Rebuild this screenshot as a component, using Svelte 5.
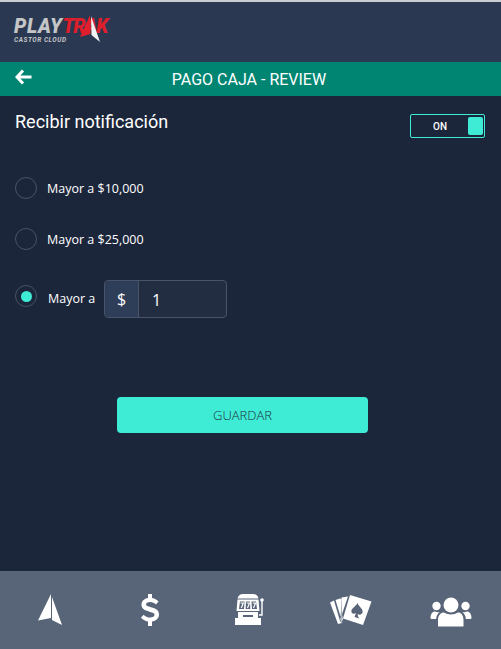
<script>
  const options = ["Mayor a $10,000", "Mayor a $25,000"];
</script>

<div class="page">
  <header class="topbar">
    <div class="logo">
      <div class="logo-name"><span class="play">PLAY</span><span class="trak">TRAK</span></div>
      <div class="logo-sub">CASTOR CLOUD</div>
      <svg class="logo-sail" viewBox="0 0 22 28" width="22" height="28">
        <path d="M10 0 L10.500 19 L0 22 Z" fill="#e0202c" />
        <path d="M11 1 L20 27 L11.500 20 Z" fill="#f2f2f2" />
      </svg>
    </div>
  </header>

  <div class="titlebar">
    <svg class="back" viewBox="0 0 18 16" width="18" height="16">
      <path d="M8 1.500 L2 8 L8 14.500 M2.500 8 H16.500" fill="none" stroke="#fff" stroke-width="3" />
    </svg>
    <h1>PAGO CAJA - REVIEW</h1>
  </div>

  <main class="content">
    <div class="notify">
      <h2>Recibir notificación</h2>
      <div class="toggle">
        <span>ON</span>
        <i></i>
      </div>
    </div>

    {#each options as label}
      <div class="option">
        <span class="radio"></span>
        <span class="label">{label}</span>
      </div>
    {/each}

    <div class="option custom">
      <span class="radio checked"></span>
      <span class="label">Mayor a</span>
      <div class="amount">
        <span class="prefix">$</span>
        <span class="value">1</span>
      </div>
    </div>

    <button class="save">GUARDAR</button>
  </main>

  <nav class="tabs">
    <svg viewBox="0 0 24 32" width="24" height="32">
      <path d="M13 0 L13 24 L0 26.500 Z" fill="#fff" />
      <path d="M14 3 L24 31 L14 26 Z" fill="#fff" />
    </svg>
    <svg viewBox="0 0 20 32" width="20" height="32">
      <path d="M8 0 H12 V4 C15 4.500 17.500 6 18.500 7.500 L16 10.500 C14.500 9 12.500 8 10 8 C7.500 8 6 9 6 10.300 C6 11.800 7.500 12.300 11 13.200 C16 14.400 19 16 19 20.500 C19 24.500 16 26.800 12 27.500 V32 H8 V27.500 C5 27 2.500 25.500 1 23.500 L3.700 20.700 C5.300 22.500 7.500 23.600 10 23.600 C12.800 23.600 14.500 22.500 14.500 20.800 C14.500 19.200 13 18.600 9.500 17.700 C4.500 16.500 1.500 14.800 1.500 10.600 C1.500 7 4.200 4.700 8 4 Z" fill="#fff" />
    </svg>
    <svg viewBox="0 0 30 32" width="30" height="32">
      <path d="M8 0 H18 C21 0 23 2 23.500 4.500 H2.500 C3 2 5 0 8 0 Z" fill="#fff" />
      <path fill-rule="evenodd" d="M2.500 5.500 H23.500 L24.500 17 H1.500 Z M5 7.500 L4 15 H9 L9.500 7.500 Z M11 7.500 L10.700 15 H15.300 L15 7.500 Z M16.500 7.500 L17 15 H22 L21 7.500 Z" fill="#fff" />
      <path d="M5.500 9 H8.300 L6.300 14 M11.700 9 H14.500 L12.500 14 M17.700 9 H20.500 L18.500 14" fill="none" stroke="#fff" stroke-width="1.200" />
      <path fill-rule="evenodd" d="M3 18 H23 V24 H26 V31 H0 V24 H3 Z M8 21 V23 H18 V21 Z" fill="#fff" />
      <circle cx="27" cy="6" r="1.800" fill="#fff" />
      <path d="M27 7 V21 H24" fill="none" stroke="#fff" stroke-width="1.400" />
    </svg>
    <svg viewBox="0 0 42 32" width="42" height="32">
      <g fill="#fff">
        <path d="M0 8.500 L4 6.500 L10 27 L12 29 L8 30 Z" />
        <path d="M5.500 6 L10 4.500 L11.500 5 L10.500 26 L12.500 29 Z" />
        <path d="M11.500 3.500 L18 2.500 L12 20 L13 27 L11.500 25 Z" />
      </g>
      <path fill-rule="evenodd" d="M20 1 L41.500 7.500 L33 31 L13 24.500 Z M27.500 9 C25.500 13 20.500 14.500 21.500 18 C22 20 24.500 20.300 26 19 L24.500 23 L29.500 24.500 C28 23 27.700 21.500 27.700 20 C29.500 21.300 32 20.500 32.500 18.500 C33.500 15 29 13 27.500 9 Z" fill="#fff" />
    </svg>
    <svg class="people" viewBox="0 0 42 30" width="42" height="30">
      <g fill="#fff">
        <circle cx="21" cy="8" r="7.500" />
        <circle cx="6.500" cy="9" r="4.200" />
        <circle cx="35.500" cy="9" r="4.200" />
        <path d="M8 29 V23 C8 18 11 15.500 14 15.500 C16 16.800 18.500 17.500 21 17.500 C23.500 17.500 26 16.800 28 15.500 C31 15.500 33.500 18 33.500 23 V29 Q33.500 29.500 33 29.500 H9 Q8 29.500 8 29 Z" />
        <path d="M0.500 21 C0.500 17 2.500 14.500 5 14.500 C6.500 15.300 8 15.500 9.800 15 C7.800 16.500 6.200 19 6.200 22 H1.500 Q0.500 22 0.500 21 Z" />
        <path d="M41.500 21 C41.500 17 39.500 14.500 37 14.500 C35.500 15.300 34 15.500 32.200 15 C34.200 16.500 35.800 19 35.800 22 H40.500 Q41.500 22 41.500 21 Z" />
      </g>
    </svg>
  </nav>
</div>

<style>
  :global(body) {
    margin: 0;
    background: #1c263a;
  }

  .page {
    height: 649px;
    display: flex;
    flex-direction: column;
    background: #1c263a;
    font-family: Roboto, sans-serif;
    color: #fff;
    overflow: hidden;
  }

  .topbar {
    flex: 0 0 62px;
    box-sizing: border-box;
    padding: 16px 0 0 14px;
    background: #2a3851;
    border-top: 2px solid #c9ccd2;
  }

  .logo {
    position: relative;
    width: 100px;
  }

  .logo-name {
    font-size: 19.5px;
    line-height: 18px;
    font-weight: 900;
    font-style: italic;
    white-space: nowrap;
  }

  .play {
    color: #c4c5c7;
    letter-spacing: 0.6px;
  }

  .trak {
    color: #dd1f2b;
    letter-spacing: -1.1px;
  }

  .logo-sub {
    margin-top: 1px;
    font-size: 6.5px;
    line-height: 6px;
    font-weight: 700;
    font-style: italic;
    letter-spacing: 0.55px;
    color: #c4c5c7;
  }

  .logo-sail {
    position: absolute;
    left: 66px;
    top: -3px;
  }

  .titlebar {
    flex: 0 0 34px;
    position: relative;
    display: flex;
    align-items: center;
    justify-content: center;
    padding-right: 3px;
    background: #008573;
  }

  .back {
    position: absolute;
    left: 15px;
    top: 7px;
  }

  h1 {
    margin: 0;
    font-size: 16px;
    font-weight: 400;
    color: #fff;
  }

  .content {
    flex: 1;
    padding: 0 16px 0 15px;
    display: flex;
    flex-direction: column;
  }

  .notify {
    display: flex;
    justify-content: space-between;
    align-items: flex-start;
    height: 81px;
    padding-top: 14px;
    box-sizing: border-box;
  }

  h2 {
    margin: 0;
    font-size: 18px;
    line-height: 24px;
    font-weight: 400;
  }

  .toggle {
    box-sizing: border-box;
    width: 75px;
    height: 24px;
    margin-top: 4px;
    display: flex;
    align-items: center;
    justify-content: space-between;
    padding: 2px 1px 2px 22px;
    border: 1px solid #3eecd5;
    border-radius: 2px;
  }

  .toggle span {
    font-size: 10px;
    font-weight: 500;
  }

  .toggle i {
    width: 15px;
    height: 18px;
    border-radius: 2px;
    background: #3eecd5;
  }

  .option {
    display: flex;
    align-items: center;
    gap: 10px;
    height: 22px;
    margin-bottom: 29px;
  }

  .label {
    font-family: "Open Sans", sans-serif;
    font-size: 12.5px;
    font-weight: 400;
    color: #fff;
  }

  .radio {
    box-sizing: border-box;
    width: 22px;
    height: 22px;
    display: flex;
    align-items: center;
    justify-content: center;
    border: 1px solid #4a5365;
    border-radius: 50%;
  }

  .radio.checked::after {
    content: "";
    width: 11px;
    height: 11px;
    border-radius: 50%;
    background: #3eecd5;
  }

  .custom {
    height: 38px;
    margin-top: 1px;
    margin-bottom: 0;
  }

  .custom .radio {
    margin-bottom: 6px;
  }

  .custom .label {
    margin: 0 -3px 2px 1px;
    width: 49px;
  }

  .amount {
    width: 123px;
    height: 38px;
    box-sizing: border-box;
    display: flex;
    border: 1px solid #49546a;
    border-radius: 4px;
    background: #222d41;
  }

  .prefix {
    width: 33px;
    display: flex;
    align-items: center;
    justify-content: center;
    background: #2f3e58;
    border-right: 1px solid #49546a;
    border-radius: 3px 0 0 3px;
    font-family: "Open Sans", sans-serif;
    font-size: 16px;
  }

  .value {
    padding-left: 13px;
    line-height: 38px;
    font-family: "Open Sans", sans-serif;
    font-size: 16px;
  }

  .save {
    align-self: flex-start;
    width: 251px;
    height: 36px;
    margin: 79px 0 0 102px;
    border: 0;
    border-radius: 4px;
    background: #3eecd5;
    color: #1e3040;
    font-family: "Open Sans", sans-serif;
    font-size: 13px;
    font-weight: 300;
  }

  .tabs {
    flex: 0 0 78px;
    display: grid;
    grid-template-columns: repeat(5, 1fr);
    justify-items: center;
    align-items: center;
    background: #586477;
  }

  .people {
    margin-top: 4px;
  }
</style>
